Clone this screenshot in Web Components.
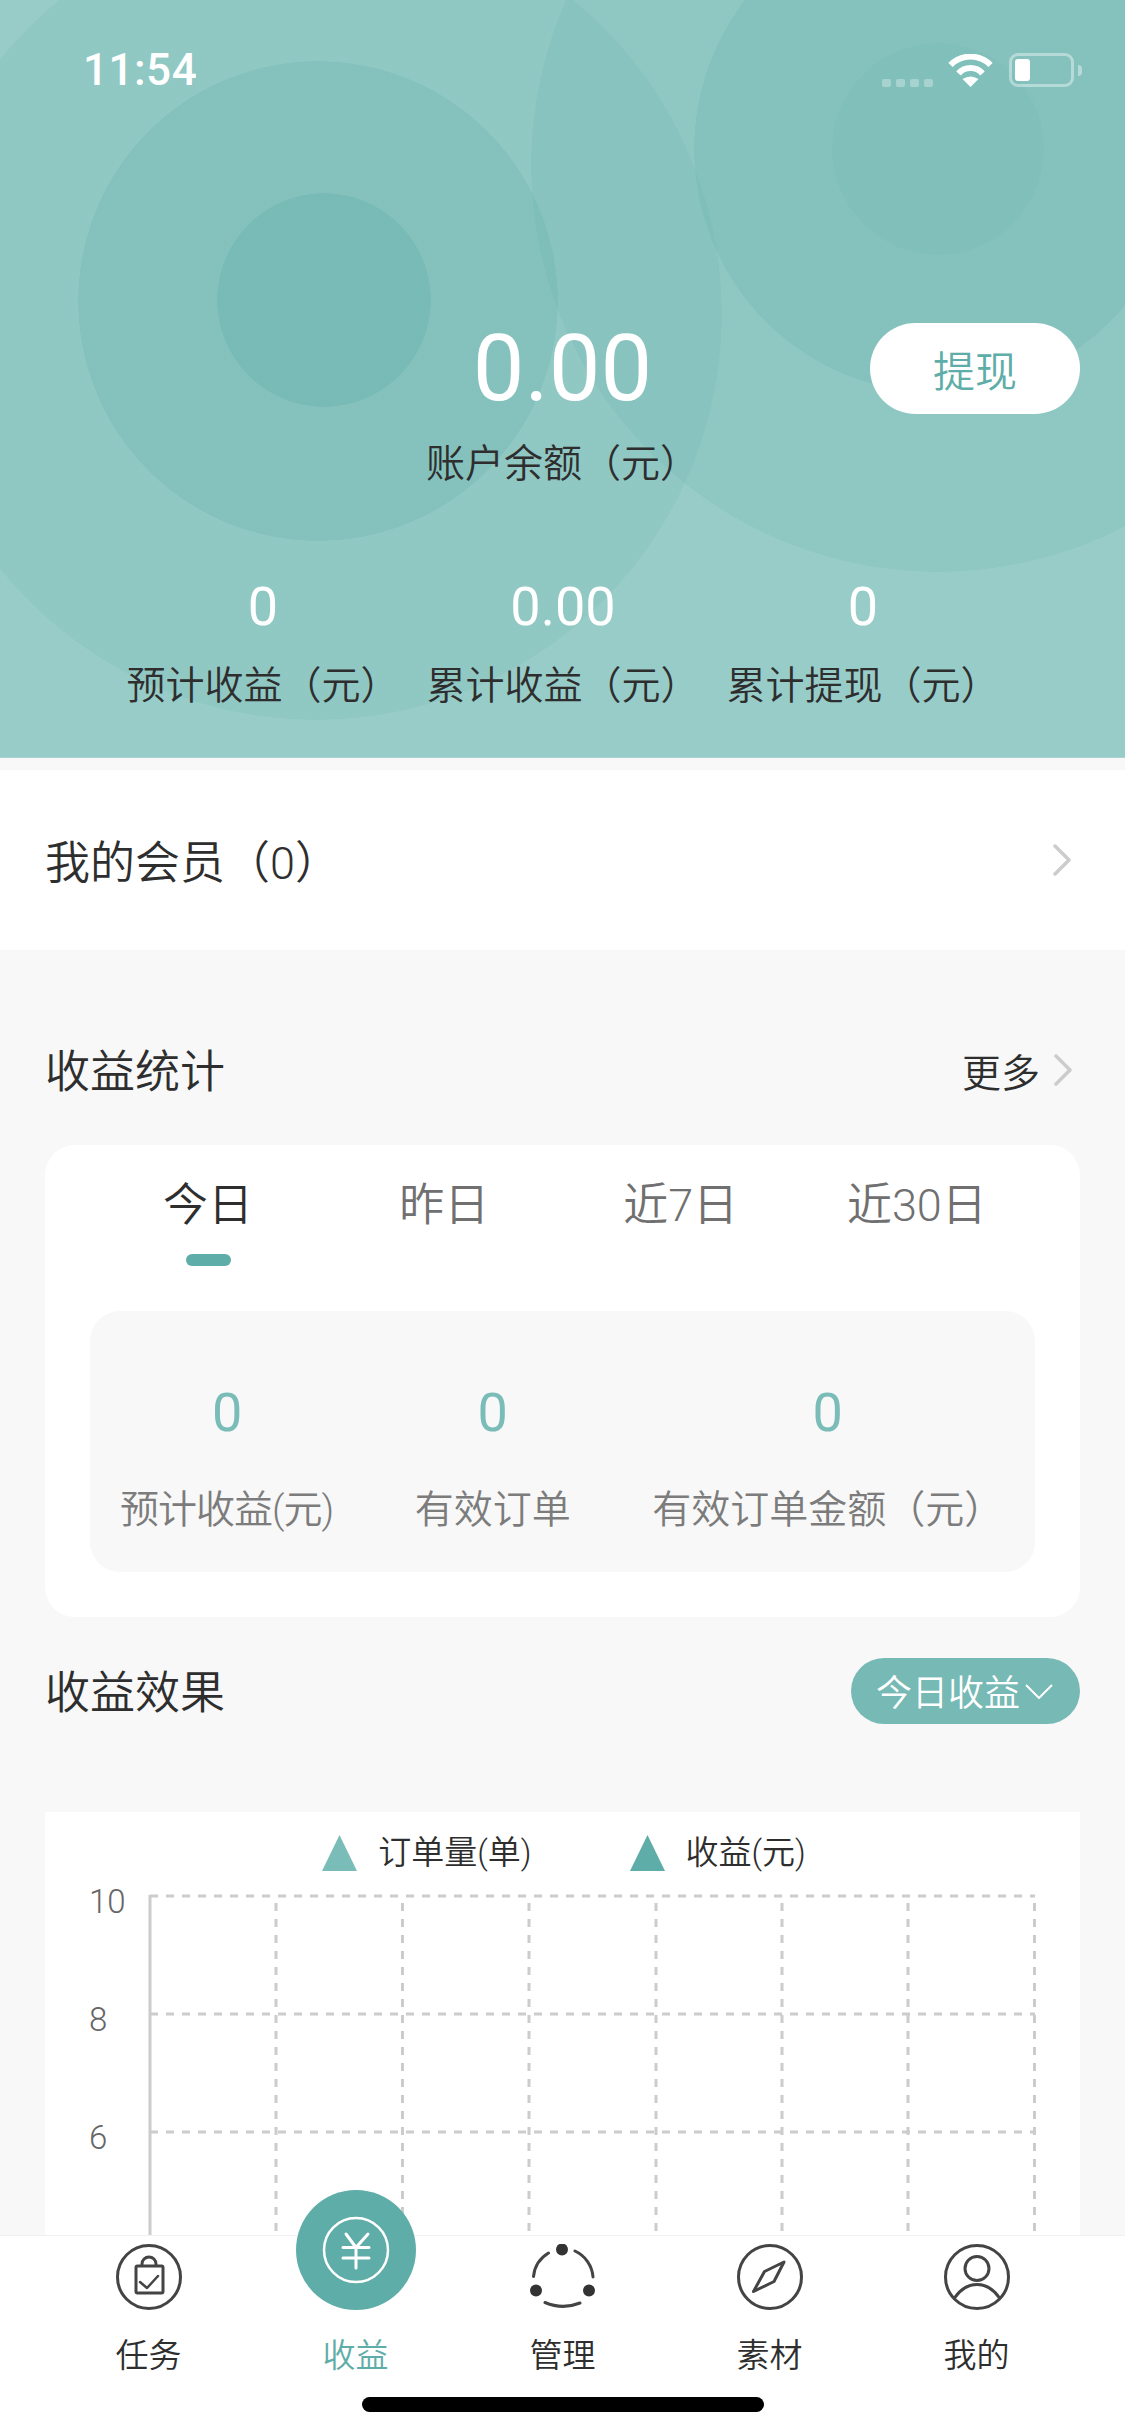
<!DOCTYPE html>
<html lang="zh-CN">
<head>
<meta charset="utf-8">
<title>收益</title>
<style>
  html, body {
    margin: 0;
    padding: 0;
  }
  body {
    width: 1125px;
    height: 2436px;
    overflow: hidden;
    background: #f8f8f8;
    color: #2e2e2e;
    font-family: Roboto, "Noto Sans CJK SC", sans-serif;
    font-weight: 350;
  }
</style>
</head>
<body>
<income-page>
  <earnings-hero>
    <hero-stat value="0">预计收益（元）</hero-stat>
    <hero-stat value="0.00">累计收益（元）</hero-stat>
    <hero-stat value="0">累计提现（元）</hero-stat>
  </earnings-hero>
  <member-row>我的会员（0）</member-row>
  <section-head style="margin-top: 70px; height: 100px">
    收益统计
    <more-link slot="action">更多</more-link>
  </section-head>
  <stats-card>
    <period-tab active>今日</period-tab>
    <period-tab>昨日</period-tab>
    <period-tab>近7日</period-tab>
    <period-tab>近30日</period-tab>
    <stat-metric slot="metrics" value="0" style="letter-spacing: -1px">预计收益(元)</stat-metric>
    <stat-metric slot="metrics" value="0">有效订单</stat-metric>
    <stat-metric slot="metrics" value="0">有效订单金额（元）</stat-metric>
  </stats-card>
  <section-head style="margin-top: 41px; height: 66px">
    收益效果
    <range-pill slot="action">今日收益</range-pill>
  </section-head>
  <effect-chart></effect-chart>
  <tab-bar>
    <tab-item>
      <svg slot="icon" width="66" height="66" viewBox="0 0 66 66" fill="none" stroke="#444" stroke-width="3">
        <circle cx="33" cy="33" r="31.5"/>
        <rect x="20" y="22" width="27" height="27" rx="1.5"/>
        <path d="M26 22v-2a7 7 0 0 1 14 0v2"/>
        <path d="M24 38l7 6 11-12" stroke-linecap="round" stroke-linejoin="round" stroke-width="2.5"/>
      </svg>
      任务
    </tab-item>
    <tab-item active>
      <svg slot="icon" width="120" height="120" viewBox="0 0 120 120" fill="none" stroke="#fff" style="margin: -54px -27px 0">
        <circle cx="60" cy="60" r="60" fill="#5fada8" stroke="none"/>
        <circle cx="60" cy="60" r="32" stroke-width="2.5"/>
        <path d="M50 44l10 13.500 12-13.500M60 57.500V78M47 57.500h26M47 68h26" stroke-width="3" stroke-linecap="round" stroke-linejoin="round"/>
      </svg>
      收益
    </tab-item>
    <tab-item>
      <svg slot="icon" width="66" height="66" viewBox="0 0 66 66" fill="none" stroke="#444" stroke-width="3">
        <path d="M3.500 32.500A31 31 0 0 1 18.500 9M45 7A31 31 0 0 1 63 33M15 58.500Q32.500 66 50 59" stroke-linecap="round"/>
        <g fill="#333" stroke="none">
          <circle cx="32" cy="5.500" r="6"/>
          <circle cx="6" cy="46.500" r="6"/>
          <circle cx="59" cy="46.500" r="6"/>
        </g>
      </svg>
      管理
    </tab-item>
    <tab-item>
      <svg slot="icon" width="66" height="66" viewBox="0 0 66 66" fill="none" stroke="#444" stroke-width="3">
        <circle cx="33" cy="33" r="31.500"/>
        <path d="M47 18L37 37.500 16.500 47.500 27.500 27.500z" stroke-linejoin="round"/>
      </svg>
      素材
    </tab-item>
    <tab-item>
      <svg slot="icon" width="66" height="66" viewBox="0 0 66 66" fill="none" stroke="#444" stroke-width="3">
        <circle cx="33" cy="33" r="31.500"/>
        <circle cx="33" cy="24.500" r="12"/>
        <path d="M10.500 54C17 44.500 24 40.500 33 40.500S49 44.500 55.500 54"/>
      </svg>
      我的
    </tab-item>
  </tab-bar>
</income-page>

<script>
class IncomePage extends HTMLElement {
  connectedCallback() {
    this.attachShadow({mode: 'open'}).innerHTML = `
      <style>
        :host {
          display: block;
          position: relative;
          width: 1125px;
          height: 2436px;
          overflow: hidden;
          background: #f8f8f8;
        }
      </style>
      <slot></slot>
    `
  }
}

class StatusBar extends HTMLElement {
  connectedCallback() {
    this.attachShadow({mode: 'open'}).innerHTML = `
      <style>
        :host {
          display: flex;
          align-items: center;
          height: 36px;
          padding: 52px 43px 12px 83px;
          color: #fff;
        }
        .time {
          font-size: 44px;
          font-weight: 500;
          line-height: 36px;
          letter-spacing: 0.5px;
          margin-right: auto;
        }
        .signal {
          display: flex;
          gap: 5px;
          margin: 25px 15px 0 0;
        }
        .signal i {
          width: 9px;
          height: 8px;
          border-radius: 2px;
          background: rgba(255, 255, 255, 0.3);
        }
        .battery {
          display: flex;
          align-items: center;
          box-sizing: border-box;
          width: 65px;
          height: 34px;
          margin-left: 16px;
          padding-left: 3px;
          border: 3px solid rgba(255, 255, 255, 0.4);
          border-radius: 9px;
        }
        .battery i {
          width: 15px;
          height: 22px;
          border-radius: 3px;
          background: #fff;
        }
        .nub {
          width: 4px;
          height: 11px;
          margin-left: 4px;
          border-radius: 0 4px 4px 0;
          background: rgba(255, 255, 255, 0.4);
        }
      </style>
      <span class="time">11:54</span>
      <span class="signal"><i></i><i></i><i></i><i></i></span>
      <svg width="45" height="33" viewBox="0 0 45 33" fill="none" stroke="#fff" stroke-width="6">
        <path d="M2.500 11A28 28 0 0 1 42.500 11"/>
        <path d="M10.500 19.500A16 16 0 0 1 34.500 19.500"/>
        <path d="M22.500 33L14.500 25Q22.500 20 30.500 25z" fill="#fff" stroke="none"/>
      </svg>
      <span class="battery"><i></i></span>
      <span class="nub"></span>
    `
  }
}

class EarningsHero extends HTMLElement {
  connectedCallback() {
    this.attachShadow({mode: 'open'}).innerHTML = `
      <style>
        :host {
          display: block;
          height: 758px;
          box-sizing: border-box;
          color: #2e2e2e;
          background-color: #98ccc8;
          background-image:
            radial-gradient(circle 107px at 324px 300px, rgba(95, 173, 168, 0.32) 106.500px, transparent 107px),
            radial-gradient(circle 240px at 318px 301px, rgba(95, 173, 168, 0.23) 239.500px, transparent 240px),
            radial-gradient(circle 406px at 316px 314px, rgba(95, 173, 168, 0.14) 405.500px, transparent 406px),
            radial-gradient(circle 106px at 938px 149px, rgba(95, 173, 168, 0.11) 105.500px, transparent 106px),
            radial-gradient(circle 244px at 938px 149px, rgba(95, 173, 168, 0.21) 243.500px, transparent 244px),
            radial-gradient(circle 407px at 938px 165px, rgba(95, 173, 168, 0.16) 406.500px, transparent 407px);
          border-bottom: 1px solid #a9d3d0;
        }
        .balance {
          display: grid;
          grid-template-columns: 1fr auto 1fr;
          margin-top: 223px;
          padding: 0 45px;
        }
        .center {
          display: flex;
          flex-direction: column;
          align-items: center;
        }
        .amount {
          font-size: 92px;
          font-weight: 400;
          line-height: 92px;
          color: #fff;
        }
        .label {
          margin-top: 24px;
          font-size: 39px;
          line-height: 50px;
        }
        button {
          justify-self: end;
          width: 210px;
          height: 91px;
          border: 0;
          border-radius: 46px;
          background: #fff;
          color: #5fada8;
          font: inherit;
          font-size: 42px;
        }
        .stats {
          display: grid;
          grid-template-columns: repeat(3, 300px);
          margin-top: 88px;
          padding-left: 113px;
        }
      </style>
      <status-bar></status-bar>
      <div class="balance">
        <span></span>
        <div class="center">
          <span class="amount">0.00</span>
          <span class="label">账户余额（元）</span>
        </div>
        <button>提现</button>
      </div>
      <div class="stats"><slot></slot></div>
    `
  }
}

class HeroStat extends HTMLElement {
  connectedCallback() {
    this.attachShadow({mode: 'open'}).innerHTML = `
      <style>
        :host {
          display: flex;
          flex-direction: column;
          align-items: center;
          font-size: 39px;
          line-height: 50px;
        }
        .value {
          margin-bottom: 24px;
          font-size: 54px;
          font-weight: 400;
          line-height: 60px;
          color: #fff;
        }
      </style>
      <span class="value">${this.getAttribute('value')}</span>
      <span><slot></slot></span>
    `
  }
}

class ChevronIcon extends HTMLElement {
  connectedCallback() {
    this.attachShadow({mode: 'open'}).innerHTML = `
      <style>
        :host {
          display: block;
          width: 20px;
          height: 32px;
        }
        svg {
          display: block;
        }
      </style>
      <svg width="20" height="32" viewBox="0 0 20 32" fill="none" stroke="#ccc" stroke-width="3.500" stroke-linecap="round" stroke-linejoin="round">
        <path d="M3 2l14 14L3 30"/>
      </svg>
    `
  }
}

class MemberRow extends HTMLElement {
  connectedCallback() {
    this.attachShadow({mode: 'open'}).innerHTML = `
      <style>
        :host {
          display: flex;
          align-items: center;
          justify-content: space-between;
          height: 180px;
          margin-top: 12px;
          padding: 0 53px 0 45px;
          background: #fff;
          font-size: 45px;
        }
        span {
          padding-bottom: 2px;
        }
      </style>
      <span><slot></slot></span>
      <chevron-icon></chevron-icon>
    `
  }
}

class SectionHead extends HTMLElement {
  connectedCallback() {
    this.attachShadow({mode: 'open'}).innerHTML = `
      <style>
        :host {
          display: flex;
          align-items: center;
          justify-content: space-between;
          padding: 0 45px;
          font-size: 45px;
        }
        span {
          padding-bottom: 3px;
        }
      </style>
      <span><slot></slot></span>
      <slot name="action"></slot>
    `
  }
}

class MoreLink extends HTMLElement {
  connectedCallback() {
    this.attachShadow({mode: 'open'}).innerHTML = `
      <style>
        :host {
          display: flex;
          align-items: center;
          gap: 13px;
          margin-right: 7px;
          font-size: 39px;
        }
      </style>
      <span><slot></slot></span>
      <chevron-icon></chevron-icon>
    `
  }
}

class RangePill extends HTMLElement {
  connectedCallback() {
    this.attachShadow({mode: 'open'}).innerHTML = `
      <style>
        :host {
          display: flex;
          align-items: center;
          gap: 5px;
          box-sizing: border-box;
          width: 229px;
          height: 66px;
          padding-left: 25px;
          border-radius: 33px;
          background: #76b9b5;
          color: #fff;
          font-size: 36px;
        }
        span {
          padding-bottom: 2px;
        }
      </style>
      <span><slot></slot></span>
      <svg width="28" height="16" viewBox="0 0 28 16" fill="none" stroke="#fff" stroke-width="2">
        <path d="M1 2l13 13L27 2"/>
      </svg>
    `
  }
}

class StatsCard extends HTMLElement {
  connectedCallback() {
    this.attachShadow({mode: 'open'}).innerHTML = `
      <style>
        :host {
          display: block;
          box-sizing: border-box;
          height: 472px;
          margin: 25px 45px 0;
          padding: 31px 45px 0;
          border-radius: 30px;
          background: #fff;
        }
        .tabs {
          display: grid;
          grid-template-columns: repeat(4, 1fr);
          height: 90px;
        }
        .metrics {
          display: flex;
          gap: 81.500px;
          height: 261px;
          box-sizing: border-box;
          margin-top: 45px;
          padding: 72px 0 0 30px;
          border-radius: 30px;
          background: #f8f8f8;
        }
      </style>
      <div class="tabs"><slot></slot></div>
      <div class="metrics"><slot name="metrics"></slot></div>
    `
  }
}

class PeriodTab extends HTMLElement {
  connectedCallback() {
    const active = this.hasAttribute('active')
    this.attachShadow({mode: 'open'}).innerHTML = `
      <style>
        :host {
          display: flex;
          flex-direction: column;
          align-items: center;
          font-size: 45px;
          line-height: 60px;
          color: ${active ? '#2e2e2e' : '#707070'};
        }
        i {
          display: ${active ? 'block' : 'none'};
          width: 45px;
          height: 12px;
          margin-top: 18px;
          border-radius: 6px;
          background: #5fada8;
        }
      </style>
      <span><slot></slot></span>
      <i></i>
    `
  }
}

class StatMetric extends HTMLElement {
  connectedCallback() {
    this.attachShadow({mode: 'open'}).innerHTML = `
      <style>
        :host {
          display: flex;
          flex-direction: column;
          align-items: center;
          font-size: 39px;
          line-height: 50px;
          color: #7c7c7c;
        }
        .value {
          margin-bottom: 42px;
          font-size: 54px;
          font-weight: 400;
          line-height: 60px;
          color: #7abcb7;
        }
      </style>
      <span class="value">${this.getAttribute('value')}</span>
      <span><slot></slot></span>
    `
  }
}

class EffectChart extends HTMLElement {
  connectedCallback() {
    const columns = [231, 357.5, 484, 611, 737, 863, 989.5]
    const rows = [[18, 10], [136, 8], [254, 6]]
    const grid = columns.map(x => `<line x1="${x}" y1="25" x2="${x}" y2="400"/>`).join('')
    const lines = rows.map(([y]) => `<line x1="105" y1="${y}" x2="990" y2="${y}"/>`).join('')
    const labels = rows.map(([y, n]) => `<text x="44" y="${y + 17}">${n}</text>`).join('')
    this.attachShadow({mode: 'open'}).innerHTML = `
      <style>
        :host {
          display: block;
          height: 600px;
          margin: 88px 45px 0;
          padding-top: 16px;
          box-sizing: border-box;
          background: #fff;
        }
        .legend {
          display: flex;
          justify-content: center;
          gap: 98px;
          padding-left: 3px;
          font-size: 33px;
          line-height: 50px;
        }
        .legend span {
          display: flex;
          align-items: center;
          gap: 21px;
        }
        svg {
          display: block;
        }
        text {
          font-family: Roboto, sans-serif;
          font-weight: 350;
          font-size: 33px;
          fill: #666;
        }
      </style>
      <div class="legend">
        <span><svg width="35" height="36" viewBox="0 0 35 36"><path d="M17.500 0L35 36H0z" fill="#7abcb7"/></svg>订单量(单)</span>
        <span><svg width="35" height="36" viewBox="0 0 35 36"><path d="M17.500 0L35 36H0z" fill="#5fada8"/></svg>收益(元)</span>
      </div>
      <svg width="1035" height="400" viewBox="0 0 1035 400" fill="none">
        <g stroke="#ccc" stroke-width="3" stroke-dasharray="8 8">${grid}${lines}</g>
        <line x1="105" y1="17" x2="105" y2="400" stroke="#ccc" stroke-width="3"/>
        ${labels}
      </svg>
    `
  }
}

class TabBar extends HTMLElement {
  connectedCallback() {
    this.attachShadow({mode: 'open'}).innerHTML = `
      <style>
        :host {
          position: absolute;
          left: 0;
          right: 0;
          bottom: 0;
          height: 201px;
          box-sizing: border-box;
          padding-top: 8px;
          border-top: 1px solid #f0f0f0;
          background: #fff;
        }
        .items {
          display: grid;
          grid-template-columns: repeat(5, 207px);
          padding: 0 45px;
        }
        .home {
          width: 402px;
          height: 15px;
          margin: 19px auto 0;
          border-radius: 8px;
          background: #000;
        }
      </style>
      <div class="items"><slot></slot></div>
      <div class="home"></div>
    `
  }
}

class TabItem extends HTMLElement {
  connectedCallback() {
    this.attachShadow({mode: 'open'}).innerHTML = `
      <style>
        :host {
          display: flex;
          flex-direction: column;
          align-items: center;
          font-size: 33px;
          line-height: 44px;
          color: ${this.hasAttribute('active') ? '#5fada8' : '#2e2e2e'};
        }
        .icon {
          display: flex;
          height: 66px;
          margin-bottom: 24px;
        }
      </style>
      <div class="icon"><slot name="icon"></slot></div>
      <span><slot></slot></span>
    `
  }
}

customElements.define('income-page', IncomePage)
customElements.define('status-bar', StatusBar)
customElements.define('earnings-hero', EarningsHero)
customElements.define('hero-stat', HeroStat)
customElements.define('chevron-icon', ChevronIcon)
customElements.define('member-row', MemberRow)
customElements.define('section-head', SectionHead)
customElements.define('more-link', MoreLink)
customElements.define('range-pill', RangePill)
customElements.define('stats-card', StatsCard)
customElements.define('period-tab', PeriodTab)
customElements.define('stat-metric', StatMetric)
customElements.define('effect-chart', EffectChart)
customElements.define('tab-bar', TabBar)
customElements.define('tab-item', TabItem)
</script>
</body>
</html>
